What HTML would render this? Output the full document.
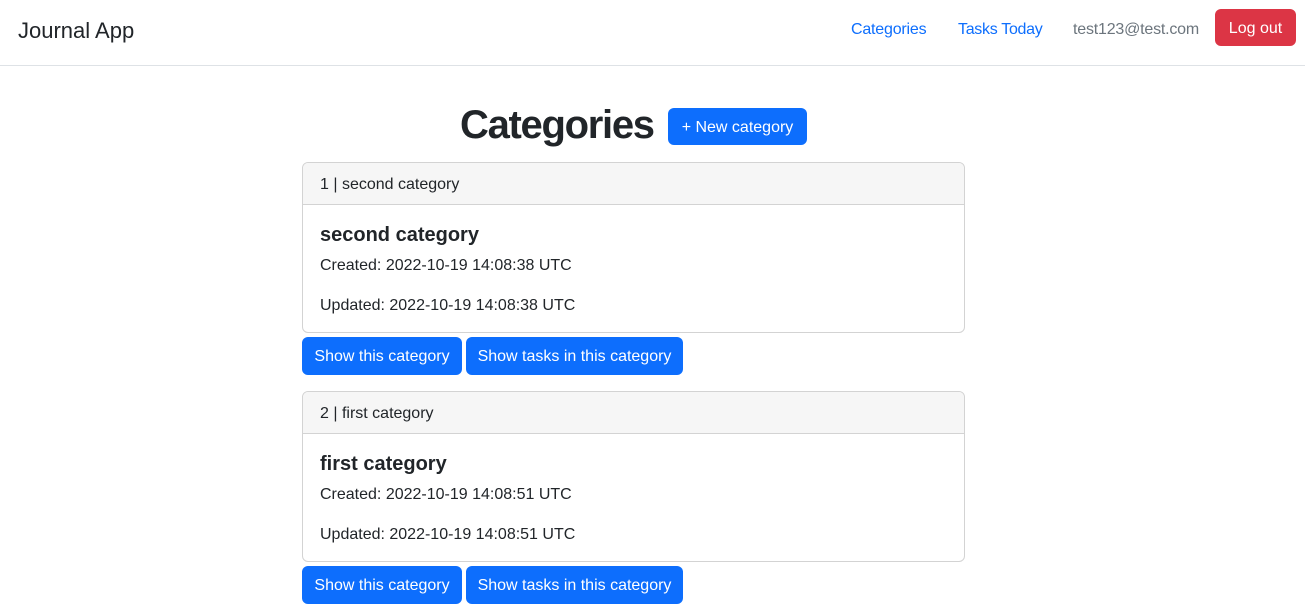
<!DOCTYPE html>
<html><head><meta charset="utf-8"><style>
*{box-sizing:border-box;margin:0;padding:0}
body{width:1305px;height:611px;overflow:hidden;background:#fff;font-family:"Liberation Sans",sans-serif;color:#212529;position:relative;font-size:16px}
.a{position:absolute;white-space:nowrap}
.nav{position:absolute;left:0;top:0;width:1305px;height:66px;border-bottom:1px solid #dee2e6}
.btn{position:absolute;background:#0d6efd;color:#fff;border-radius:6px;display:flex;align-items:center;justify-content:center;font-size:16px;padding-top:2px}
.card{position:absolute;left:302px;width:663px;height:171px;border:1px solid #d3d3d3;border-radius:6px;overflow:hidden}
.ch{height:42px;background:#f6f6f6;border-bottom:1px solid #d3d3d3;padding:13px 17px;font-size:16px;line-height:18px}
.ct{position:absolute;left:17px;font-size:20px;font-weight:bold;color:#212529}
.cp{position:absolute;left:17px;font-size:16px}
</style></head><body>
<div class="nav"></div>
<div class="a" style="left:18px;top:18px;font-size:22px;color:#212529">Journal App</div>
<div class="a" style="left:851px;top:21px;color:#0d6efd;letter-spacing:-0.2px">Categories</div>
<div class="a" style="left:958px;top:21px;color:#0d6efd;letter-spacing:-0.3px">Tasks Today</div>
<div class="a" style="left:1073px;top:21px;color:#6c757d;letter-spacing:-0.2px">test123@test.com</div>
<div class="btn" style="left:1215px;top:9px;width:81px;height:37px;background:#dc3545">Log out</div>

<div class="a" style="left:460px;top:103px;font-size:40px;font-weight:bold;color:#212529;letter-spacing:-1.3px">Categories</div>
<div class="btn" style="left:668px;top:108px;width:139px;height:37px">+ New category</div>

<div class="card" style="top:162px">
<div class="ch">1 | second category</div>
<div class="ct" style="top:61px">second category</div>
<div class="cp" style="top:94px">Created: 2022-10-19 14:08:38 UTC</div>
<div class="cp" style="top:134px">Updated: 2022-10-19 14:08:38 UTC</div>
</div>
<div class="btn" style="left:302px;top:337px;width:160px;height:38px">Show this category</div>
<div class="btn" style="left:466px;top:337px;width:217px;height:38px">Show tasks in this category</div>

<div class="card" style="top:391px">
<div class="ch">2 | first category</div>
<div class="ct" style="top:61px">first category</div>
<div class="cp" style="top:94px">Created: 2022-10-19 14:08:51 UTC</div>
<div class="cp" style="top:134px">Updated: 2022-10-19 14:08:51 UTC</div>
</div>
<div class="btn" style="left:302px;top:566px;width:160px;height:38px">Show this category</div>
<div class="btn" style="left:466px;top:566px;width:217px;height:38px">Show tasks in this category</div>
</body></html>
